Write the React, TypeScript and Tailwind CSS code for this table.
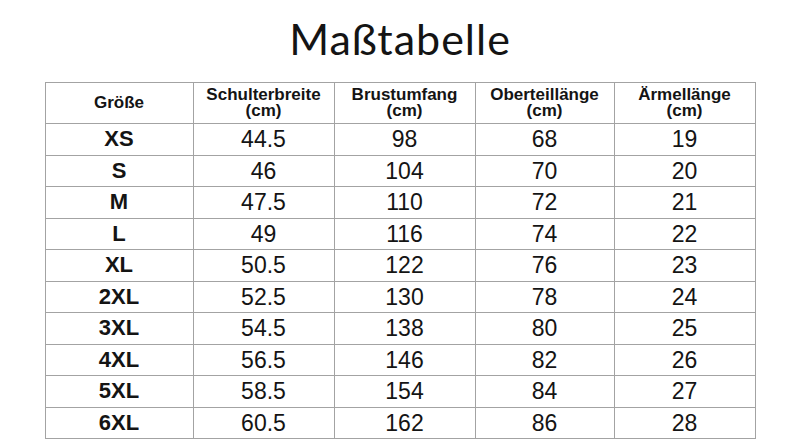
import React from "react";

const rows: [string, string, string, string, string][] = [
  ["XS", "44.5", "98", "68", "19"],
  ["S", "46", "104", "70", "20"],
  ["M", "47.5", "110", "72", "21"],
  ["L", "49", "116", "74", "22"],
  ["XL", "50.5", "122", "76", "23"],
  ["2XL", "52.5", "130", "78", "24"],
  ["3XL", "54.5", "138", "80", "25"],
  ["4XL", "56.5", "146", "82", "26"],
  ["5XL", "58.5", "154", "84", "27"],
  ["6XL", "60.5", "162", "86", "28"],
];

export default function App() {
  return (
    <div className="w-[800px] h-[447px] bg-white flex flex-col items-center text-[#141414]" style={{ fontFamily: "'Liberation Sans', Arial, sans-serif" }}>
      <h1 className="mt-[14px] h-[50px] text-[43px] leading-[50px] font-normal tracking-[1px]" style={{ fontFamily: "Lato, 'Open Sans', sans-serif" }}>
        Maßtabelle
      </h1>
      <table className="mt-[18px] border-collapse table-fixed w-[710px]">
        <colgroup>
          <col className="w-[148px]" />
          <col className="w-[141px]" />
          <col className="w-[141px]" />
          <col className="w-[139px]" />
          <col className="w-[141px]" />
        </colgroup>
        <thead>
          <tr className="h-[41px]">
            {["Größe", "Schulterbreite\n(cm)", "Brustumfang\n(cm)", "Oberteillänge\n(cm)", "Ärmellänge\n(cm)"].map((h, i) => (
              <th key={i} className="border border-[#a3a3a3] p-0 text-[17px] leading-[16px] font-bold text-center whitespace-pre-line align-middle">
                {h}
              </th>
            ))}
          </tr>
        </thead>
        <tbody>
          {rows.map((r) => (
            <tr key={r[0]} className="h-[31.5px]">
              {r.map((c, i) => (
                <td key={i} className={`border border-[#a3a3a3] p-0 text-center align-middle leading-[28px] ${i === 0 ? "text-[22px] font-bold" : "text-[23px]"}`}>
                  {c}
                </td>
              ))}
            </tr>
          ))}
        </tbody>
      </table>
    </div>
  );
}
